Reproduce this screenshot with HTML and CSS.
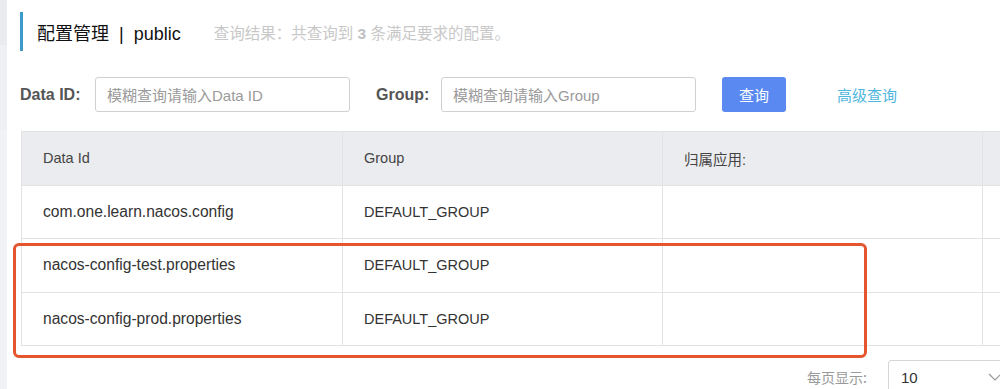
FILE: index.html
```html
<!DOCTYPE html>
<html lang="zh-CN">
<head>
<meta charset="utf-8">
<title>配置管理</title>
<link rel="stylesheet" href="styles.css">
</head>
<body>
<div class="page">
  <div class="sidebar"></div>
  <div class="main">
    <div class="title-row">
      <span class="title">配置管理 &nbsp;|&nbsp; public</span>
      <span class="summary">查询结果：共查询到 <b>3</b> 条满足要求的配置。</span>
    </div>
    <div class="search-row">
      <label class="field-label">Data ID:</label>
      <div class="input"><span class="placeholder">模糊查询请输入Data ID</span></div>
      <label class="field-label group-label">Group:</label>
      <div class="input"><span class="placeholder">模糊查询请输入Group</span></div>
      <button class="btn-primary">查询</button>
      <a class="link">高级查询</a>
    </div>
    <div class="table-wrap">
      <table class="table">
        <colgroup>
          <col class="c1"><col class="c2"><col class="c3"><col class="c4">
        </colgroup>
        <thead>
          <tr><th>Data Id</th><th>Group</th><th>归属应用:</th><th></th></tr>
        </thead>
        <tbody>
          <tr><td class="data-id">com.one.learn.nacos.config</td><td>DEFAULT_GROUP</td><td></td><td></td></tr>
          <tr><td class="data-id">nacos-config-test.properties</td><td>DEFAULT_GROUP</td><td></td><td></td></tr>
          <tr><td class="data-id">nacos-config-prod.properties</td><td>DEFAULT_GROUP</td><td></td><td></td></tr>
        </tbody>
      </table>
    </div>
    <div class="pager">
      <span class="pager-label">每页显示:</span>
      <div class="select"><span>10</span>
        <svg class="chev" width="14" height="8" viewBox="0 0 14 8"><path d="M1 1 L7 7 L13 1" fill="none" stroke="#999" stroke-width="1.2"/></svg>
      </div>
    </div>
  </div>
  <div class="highlight"></div>
</div>
</body>
</html>
```
FILE: styles.css
```css
html, body {
  margin: 0;
  padding: 0;
  background: #fff;
  overflow: hidden;
}
body {
  width: 1000px;
  height: 389px;
  font-family: "Liberation Sans", Arial, "Noto Sans CJK SC", sans-serif;
  color: #333;
}
.page {
  position: relative;
  display: flex;
  width: 1000px;
  height: 389px;
  overflow: hidden;
}
.sidebar {
  width: 7px;
  flex: none;
  background: linear-gradient(#e9ebee 0 45px, #eef0f3 45px 130px, #f0f2f5 130px);
}
.main {
  flex: 1;
  padding-left: 13px;
  min-width: 0;
}
.title-row {
  margin-top: 12px;
  height: 39px;
  border-left: 3px solid #3d9bcc;
  padding-left: 14px;
  display: flex;
  align-items: center;
}
.title {
  font-size: 18px;
  color: #111;
  font-family: "Liberation Sans", "Noto Sans CJK SC", sans-serif;
}
.summary {
  margin-left: 33px;
  font-size: 15.5px;
  color: #c8c8c8;
  white-space: nowrap;
}
.summary b { color: #c0c0c0; }
.search-row {
  margin-top: 26px;
  height: 35px;
  display: flex;
  align-items: center;
}
.field-label {
  flex: none;
  font-size: 16px;
  font-weight: bold;
  color: #555;
  width: 75px;
}
.group-label {
  margin-left: 26px;
  width: 65px;
}
.input {
  flex: none;
  border: 1px solid #d0d0d0;
  border-radius: 3px;
  display: flex;
  align-items: center;
  padding-left: 11px;
  box-sizing: border-box;
  width: 255px;
  height: 35px;
}
.placeholder {
  font-size: 15px;
  color: #9a9a9a;
}
.btn-primary {
  flex: none;
  margin-left: 26px;
  width: 64px;
  height: 35px;
  border: none;
  border-radius: 3px;
  background: #5a89f2;
  color: #fff;
  font-size: 15px;
  font-family: "Noto Sans CJK SC", sans-serif;
  padding: 0;
}
.link {
  flex: none;
  margin-left: 51px;
  font-size: 15px;
  color: #4fb6dd;
  font-family: "Noto Sans CJK SC", sans-serif;
}
.table-wrap {
  margin-top: 19px;
  margin-left: 1px;
  width: 1100px;
}
.table {
  border-collapse: collapse;
  table-layout: fixed;
  width: 1061px;
  font-size: 14.5px;
}
.c1 { width: 321px; }
.c2 { width: 320px; }
.c3 { width: 320px; }
.c4 { width: 100px; }
.table th, .table td {
  border: 1px solid #e3e3e3;
  height: 53.5px;
  padding: 0 0 0 21px;
  text-align: left;
  box-sizing: border-box;
  color: #333;
  font-weight: normal;
}
.table td.data-id {
  font-size: 15.6px;
}
.table th {
  background: #ebecef;
  color: #444;
}
.pager {
  margin-top: 14px;
  display: flex;
  align-items: center;
  padding-left: 787px;
}
.pager-label {
  flex: none;
  font-size: 14px;
  color: #999;
  width: 81px;
  font-family: "Noto Sans CJK SC", sans-serif;
}
.select {
  flex: none;
  width: 140px;
  height: 34px;
  border: 1px solid #d6d6d6;
  border-radius: 3px;
  box-sizing: border-box;
  display: flex;
  align-items: center;
  padding-left: 12px;
  font-size: 15px;
  color: #333;
  position: relative;
}
.chev {
  position: absolute;
  left: 99px;
  top: 12px;
}
.highlight {
  position: absolute;
  left: 13px;
  top: 243px;
  width: 854px;
  height: 115px;
  border: 3px solid #e5552e;
  border-radius: 6px;
  box-sizing: border-box;
  pointer-events: none;
}
```
